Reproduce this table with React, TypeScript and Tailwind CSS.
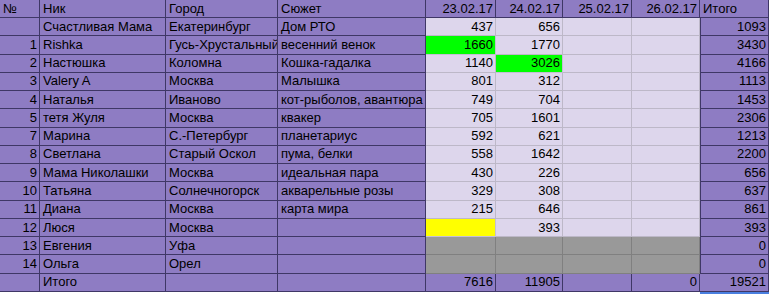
import React from 'react';

type Row = {
  n: string;
  nick: string;
  city: string;
  plot: string;
  d: string[]; // four day values
  total: string;
  fills?: (string | null)[]; // override colour per day cell
};

const GREEN = 'bg-[#00ff00]';
const YELLOW = 'bg-[#ffff00]';
const GRAY = 'bg-[#999999]';

const rows: Row[] = [
  { n: '', nick: 'Счастливая Мама', city: 'Екатеринбург', plot: 'Дом РТО', d: ['437', '656', '', ''], total: '1093' },
  { n: '1', nick: 'Rishka', city: 'Гусь-Хрустальный', plot: 'весенний венок', d: ['1660', '1770', '', ''], total: '3430', fills: [GREEN, null, null, null] },
  { n: '2', nick: 'Настюшка', city: 'Коломна', plot: 'Кошка-гадалка', d: ['1140', '3026', '', ''], total: '4166', fills: [null, GREEN, null, null] },
  { n: '3', nick: 'Valery A', city: 'Москва', plot: 'Малышка', d: ['801', '312', '', ''], total: '1113' },
  { n: '4', nick: 'Наталья', city: 'Иваново', plot: 'кот-рыболов, авантюра', d: ['749', '704', '', ''], total: '1453' },
  { n: '5', nick: 'тетя Жуля', city: 'Москва', plot: 'квакер', d: ['705', '1601', '', ''], total: '2306' },
  { n: '7', nick: 'Марина', city: 'С.-Петербург', plot: 'планетариус', d: ['592', '621', '', ''], total: '1213' },
  { n: '8', nick: 'Светлана', city: 'Старый Оскол', plot: 'пума, белки', d: ['558', '1642', '', ''], total: '2200' },
  { n: '9', nick: 'Мама Николашки', city: 'Москва', plot: 'идеальная пара', d: ['430', '226', '', ''], total: '656' },
  { n: '10', nick: 'Татьяна', city: 'Солнечногорск', plot: 'акварельные розы', d: ['329', '308', '', ''], total: '637' },
  { n: '11', nick: 'Диана', city: 'Москва', plot: 'карта мира', d: ['215', '646', '', ''], total: '861' },
  { n: '12', nick: 'Люся', city: 'Москва', plot: '', d: ['', '393', '', ''], total: '393', fills: [YELLOW, null, null, null] },
  { n: '13', nick: 'Евгения', city: 'Уфа', plot: '', d: ['', '', '', ''], total: '0', fills: [GRAY, GRAY, GRAY, GRAY] },
  { n: '14', nick: 'Ольга', city: 'Орел', plot: '', d: ['', '', '', ''], total: '0', fills: [GRAY, GRAY, GRAY, GRAY] },
];

const grid = 'grid grid-cols-[40px_126px_112px_148px_70px_67px_69px_68px_69px]';
const purple = 'bg-[#8e7cc3] border-b border-r border-[#3f3766]';

function Cell({ children, right, className }: { children?: React.ReactNode; right?: boolean; className: string }) {
  return (
    <div
      className={`flex items-center overflow-hidden whitespace-nowrap ${right ? 'justify-end pr-[2px]' : 'pl-[3px]'} ${className}`}
    >
      {children}
    </div>
  );
}

function DayCell({ value, fill }: { value: string; fill: string | null | undefined }) {
  if (fill === GRAY) {
    return <Cell right className={`${GRAY} border-b border-r border-[#808080]`}>{value}</Cell>;
  }
  if (fill) {
    return <Cell right className={`${fill} border-b border-r border-[#c4bfd4]`}>{value}</Cell>;
  }
  return <Cell right className="bg-[#ddd6ec] border-b border-r border-[#bdb8c8]">{value}</Cell>;
}

export default function App() {
  return (
    <div className="w-[770px] h-[295px] bg-white overflow-hidden text-[13px] leading-[16px] text-black font-['Liberation_Sans',Arial,sans-serif]">
      {/* header */}
      <div className={`${grid} h-[18px]`}>
        <Cell className={purple}>№</Cell>
        <Cell className={purple}>Ник</Cell>
        <Cell className={purple}>Город</Cell>
        <Cell className={purple}>Сюжет</Cell>
        <Cell right className={purple}>23.02.17</Cell>
        <Cell right className={purple}>24.02.17</Cell>
        <Cell right className={purple}>25.02.17</Cell>
        <Cell right className={purple}>26.02.17</Cell>
        <Cell className={purple}>Итого</Cell>
      </div>

      {rows.map((r, i) => (
        <div key={i} className={`${grid} h-[18.27px]`}>
          <Cell right className={purple}>{r.n}</Cell>
          <Cell className={purple}>{r.nick}</Cell>
          <Cell className={purple}>{r.city}</Cell>
          <Cell className={purple}>{r.plot}</Cell>
          {r.d.map((v, j) => (
            <DayCell key={j} value={v} fill={r.fills ? r.fills[j] : null} />
          ))}
          <Cell right className={`${purple} border-l border-l-[#3f3766]`}>{r.total}</Cell>
        </div>
      ))}

      {/* totals */}
      <div className={`${grid} h-[18.27px]`}>
        <Cell className={purple}></Cell>
        <Cell className={purple}>Итого</Cell>
        <Cell className={purple}></Cell>
        <Cell className={purple}></Cell>
        <Cell right className={purple}>7616</Cell>
        <Cell right className={purple}>11905</Cell>
        <Cell right className={purple}></Cell>
        <Cell right className={purple}>0</Cell>
        <Cell right className={purple}>19521</Cell>
      </div>

      <div className={`${grid} h-[3px]`}>
        <div className="col-start-9 border-t-2 border-[#4a7fe0]"></div>
      </div>
    </div>
  );
}
